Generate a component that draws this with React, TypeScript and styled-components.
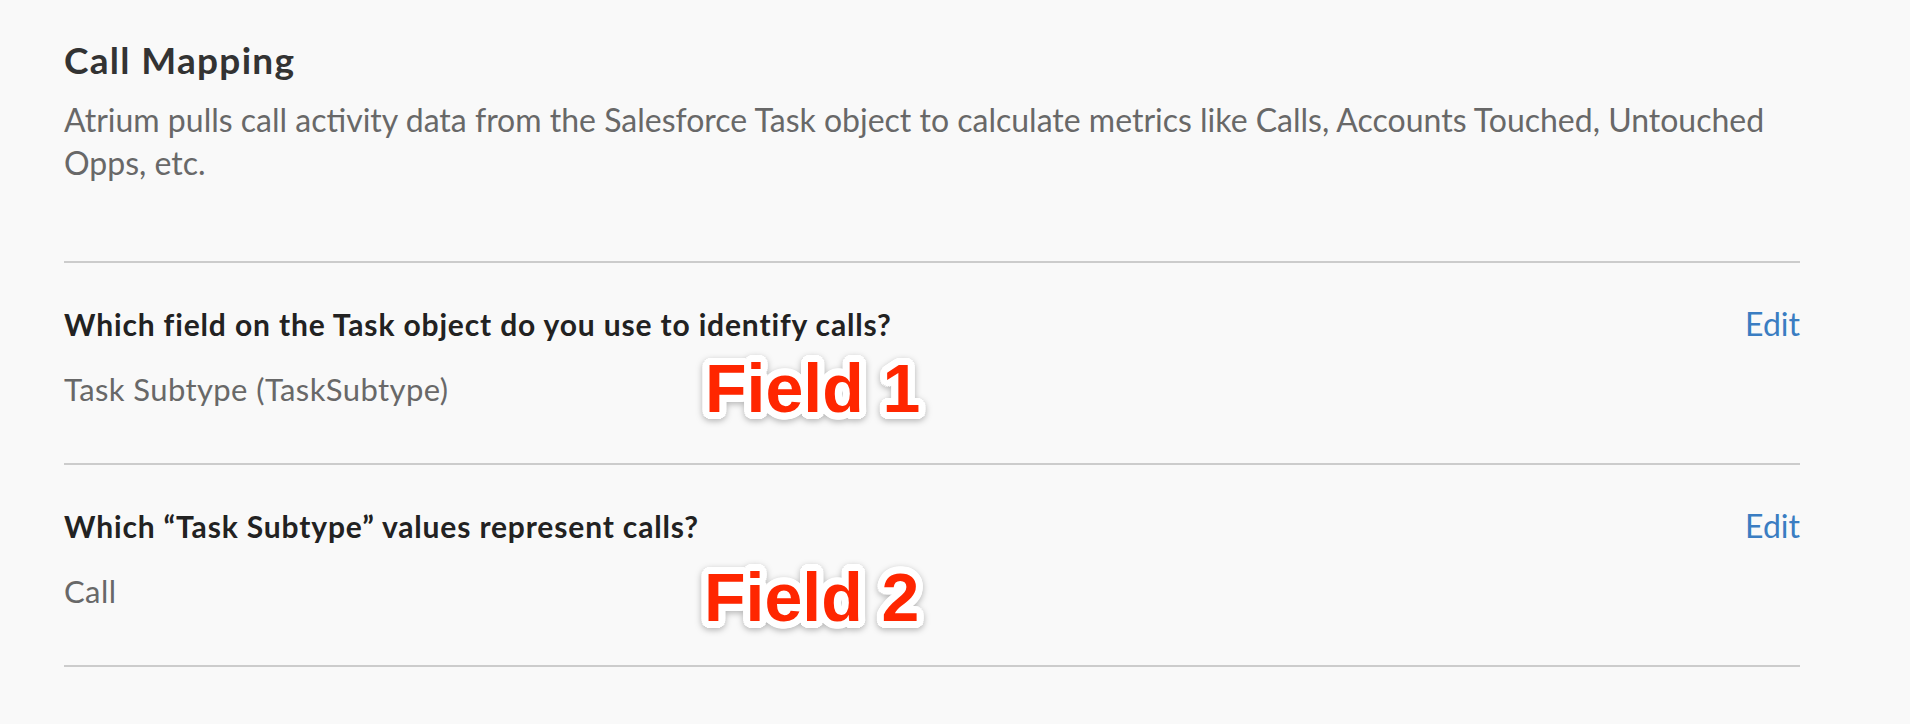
import React from "react";
import styled, { createGlobalStyle } from "styled-components";

const GlobalStyle = createGlobalStyle`
  html, body {
    margin: 0;
    padding: 0;
    background: #f9f9f9;
  }
  body {
    font-family: Lato, "Open Sans", sans-serif;
    -webkit-font-smoothing: antialiased;
  }
`;

const Page = styled.main`
  width: 1736px;
  padding: 38px 0 0 64px;
`;

const Header = styled.header`
  padding-bottom: 76px;
`;

const Title = styled.h1`
  margin: 0;
  font-size: 37px;
  line-height: 44px;
  font-weight: 700;
  letter-spacing: 1.3px;
  color: #333333;
`;

const Description = styled.p`
  margin: 16px 0 0;
  font-size: 32px;
  line-height: 43.3px;
  font-weight: 400;
  color: #686868;
`;

const Row = styled.section`
  position: relative;
  border-top: 2px solid #cccccc;
  padding: 43px 0 54px;
  &:last-child {
    border-bottom: 2px solid #cccccc;
  }
`;

const QuestionLine = styled.div`
  display: flex;
  justify-content: space-between;
  align-items: baseline;
`;

const Question = styled.h2`
  margin: 0;
  font-size: 30px;
  line-height: 36px;
  font-weight: 700;
  letter-spacing: 0.85px;
  color: #222222;
`;

const EditLink = styled.a`
  font-size: 32px;
  line-height: 36px;
  font-weight: 400;
  color: #3a7dc2;
  text-decoration: none;
  cursor: pointer;
`;

const Value = styled.div`
  margin-top: 27px;
  font-size: 31px;
  line-height: 40px;
  font-weight: 400;
  letter-spacing: 0.4px;
  color: #686868;
`;

const outline = (() => {
  const parts: string[] = [];
  const r = 7;
  for (let i = 0; i < 24; i++) {
    const a = (i / 24) * Math.PI * 2;
    parts.push(`${(Math.cos(a) * r).toFixed(2)}px ${(Math.sin(a) * r).toFixed(2)}px 0 #ffffff`);
  }
  return parts.join(", ");
})();

const Annotation = styled.span<{ $top: number; $left: number }>`
  position: absolute;
  top: ${(p) => p.$top}px;
  left: ${(p) => p.$left}px;
  font-family: "Liberation Sans", Arial, sans-serif;
  font-weight: 700;
  font-size: 68px;
  line-height: 68px;
  color: #ff2600;
  white-space: nowrap;
  text-shadow: ${outline};
  filter: drop-shadow(0 2px 3px rgba(0, 0, 0, 0.28));
  pointer-events: none;
`;

type Field = {
  question: string;
  value: string;
  label: string;
  top: number;
  left: number;
};

const fields: Field[] = [
  {
    question: "Which field on the Task object do you use to identify calls?",
    value: "Task Subtype (TaskSubtype)",
    label: "Field 1",
    top: 91,
    left: 641,
  },
  {
    question: "Which \u201CTask Subtype\u201D values represent calls?",
    value: "Call",
    label: "Field 2",
    top: 98,
    left: 640,
  },
];

export default function App() {
  return (
    <>
      <GlobalStyle />
      <Page>
        <Header>
          <Title>Call Mapping</Title>
          <Description>
            Atrium pulls call activity data from the Salesforce Task object to calculate metrics like
            Calls, Accounts Touched, Untouched Opps, etc.
          </Description>
        </Header>
        {fields.map((f) => (
          <Row key={f.label}>
            <QuestionLine>
              <Question>{f.question}</Question>
              <EditLink>Edit</EditLink>
            </QuestionLine>
            <Value>{f.value}</Value>
            <Annotation $top={f.top} $left={f.left}>
              {f.label}
            </Annotation>
          </Row>
        ))}
      </Page>
    </>
  );
}
